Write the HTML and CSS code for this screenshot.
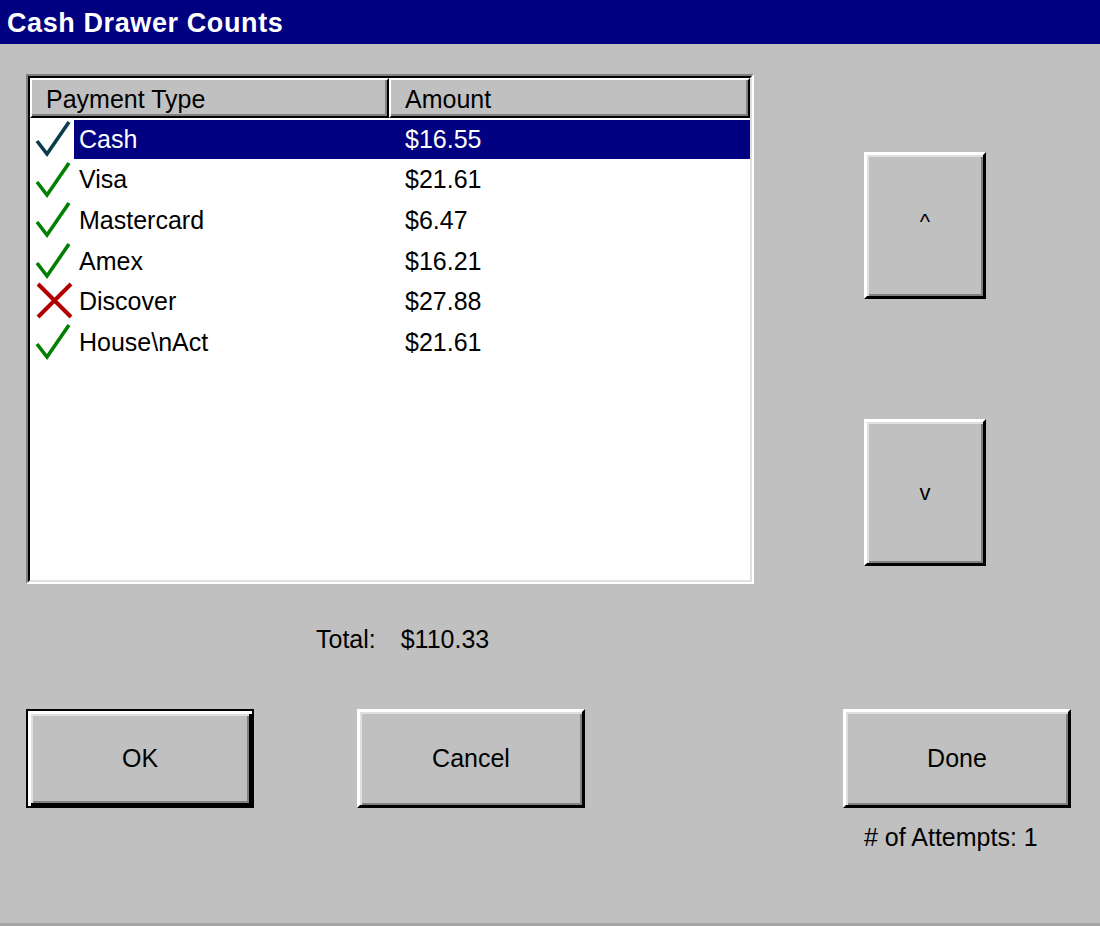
FILE: index.html
```html
<!DOCTYPE html>
<html lang="en">

<head>
    <meta charset="UTF-8">
    <title>Cash Drawer Counts</title>
    <link rel="stylesheet" href="styles.css">
</head>

<body>
    <div class="window">
        <div class="titlebar">Cash Drawer Counts</div>

        <div class="main">
            <div class="listbox">
                <div class="listbox-inner">
                    <div class="list-head">
                        <div class="head-cell col-name">Payment Type</div>
                        <div class="head-cell col-amount">Amount</div>
                    </div>

                    <div class="row selected">
                        <div class="row-icon">
                            <svg width="44" height="40" viewBox="0 0 44 40"><path d="M7 22 L17 35 L39 3" class="tick dark" /></svg>
                        </div>
                        <div class="row-text">
                            <span class="cell-name">Cash</span>
                            <span class="cell-amount">$16.55</span>
                        </div>
                    </div>
                    <div class="row">
                        <div class="row-icon">
                            <svg width="44" height="40" viewBox="0 0 44 40"><path d="M7 22 L17 35 L39 3" class="tick" /></svg>
                        </div>
                        <div class="row-text">
                            <span class="cell-name">Visa</span>
                            <span class="cell-amount">$21.61</span>
                        </div>
                    </div>
                    <div class="row">
                        <div class="row-icon">
                            <svg width="44" height="40" viewBox="0 0 44 40"><path d="M7 22 L17 35 L39 3" class="tick" /></svg>
                        </div>
                        <div class="row-text">
                            <span class="cell-name">Mastercard</span>
                            <span class="cell-amount">$6.47</span>
                        </div>
                    </div>
                    <div class="row">
                        <div class="row-icon">
                            <svg width="44" height="40" viewBox="0 0 44 40"><path d="M7 22 L17 35 L39 3" class="tick" /></svg>
                        </div>
                        <div class="row-text">
                            <span class="cell-name">Amex</span>
                            <span class="cell-amount">$16.21</span>
                        </div>
                    </div>
                    <div class="row">
                        <div class="row-icon">
                            <svg width="44" height="40" viewBox="0 0 44 40"><path d="M8 3 L41 36 M41 3 L8 36" class="cross" /></svg>
                        </div>
                        <div class="row-text">
                            <span class="cell-name">Discover</span>
                            <span class="cell-amount">$27.88</span>
                        </div>
                    </div>
                    <div class="row">
                        <div class="row-icon">
                            <svg width="44" height="40" viewBox="0 0 44 40"><path d="M7 22 L17 35 L39 3" class="tick" /></svg>
                        </div>
                        <div class="row-text">
                            <span class="cell-name">House\nAct</span>
                            <span class="cell-amount">$21.61</span>
                        </div>
                    </div>
                </div>
            </div>

            <div class="scroll-buttons">
                <div class="btn btn-arrow arrow-up">^</div>
                <div class="btn btn-arrow">v</div>
            </div>
        </div>

        <div class="total">
            <span class="total-label">Total:</span>
            <span>$110.33</span>
        </div>

        <div class="buttons">
            <div class="btn btn-wide btn-default">OK</div>
            <div class="btn btn-wide btn-cancel">Cancel</div>
            <div class="done-box">
                <div class="btn btn-wide">Done</div>
                <div class="attempts"># of Attempts: 1</div>
            </div>
        </div>
    </div>
</body>

</html>
```

FILE: styles.css
```css
* {
    padding: 0;
    margin: 0;
    box-sizing: border-box;
}

body {
    background: #c0c0c0;
    font-family: "Liberation Sans", Arial, sans-serif;
    font-size: 25px;
    color: #000000;
}

.window {
    width: 1100px;
    height: 926px;
    border-bottom: 3px solid #a4a4a4;
}

.titlebar {
    height: 44px;
    line-height: 46px;
    padding-left: 7px;
    background: #000080;
    color: #ffffff;
    font-weight: bold;
    font-size: 27px;
    letter-spacing: 0.6px;
}

.main {
    display: flex;
    padding: 30px 0 0 26px;
}

/* sunken list box */
.listbox {
    width: 728px;
    height: 510px;
    border: 2px solid;
    border-color: #808080 #ffffff #ffffff #808080;
    background: #ffffff;
}

.listbox-inner {
    height: 100%;
    border: 2px solid;
    border-color: #000000 #dfdfdf #dfdfdf #000000;
}

.list-head {
    display: flex;
    height: 41px;
    padding-bottom: 1px;
}

.head-cell {
    height: 40px;
    line-height: 38px;
    background: #c0c0c0;
    border: 2px solid;
    border-color: #ffffff #000000 #000000 #ffffff;
    box-shadow: inset -2px -2px 0 #808080;
}

.col-name {
    width: 359px;
    padding-left: 14px;
}

.col-amount {
    flex: 1;
    padding-left: 14px;
}

.row {
    display: flex;
    height: 40.6px;
}

.row-icon {
    width: 44px;
    flex-shrink: 0;
}

.row-icon svg {
    display: block;
}

.tick {
    fill: none;
    stroke: #008000;
    stroke-width: 3.6;
}

.tick.dark {
    stroke: #0c3c4c;
}

.cross {
    fill: none;
    stroke: #b00000;
    stroke-width: 4;
}

.row-text {
    flex: 1;
    display: flex;
    align-items: center;
}

.selected .row-text {
    background: #000080;
    color: #ffffff;
    height: 39px;
    margin-top: 1px;
}

.cell-name {
    width: 315px;
    padding-left: 5px;
}

.cell-amount {
    padding-left: 16px;
}

/* raised buttons */
.btn {
    display: flex;
    align-items: center;
    justify-content: center;
    background: #c0c0c0;
    border: 3px solid;
    border-color: #ffffff #000000 #000000 #ffffff;
    box-shadow: inset 2px 2px 0 #dfdfdf, inset -2px -2px 0 #808080;
}

.scroll-buttons {
    display: flex;
    flex-direction: column;
    gap: 120px;
    margin-left: 110px;
    padding-top: 78px;
}

.btn-arrow {
    width: 122px;
    height: 147px;
    font-size: 22px;
}

.arrow-up {
    padding-bottom: 8px;
}

.total {
    padding: 40px 0 0 316px;
    height: 70px;
    line-height: 30px;
}

.total-label {
    margin-right: 18px;
}

.buttons {
    display: flex;
    align-items: flex-start;
    padding: 55px 0 0 26px;
}

.btn-wide {
    width: 228px;
    height: 99px;
}

.btn-default {
    border: 2px solid #000000;
    box-shadow: inset 3px 3px 0 #ffffff, inset -3px -3px 0 #000000, inset 5px 5px 0 #dfdfdf, inset -5px -5px 0 #808080;
}

.btn-cancel {
    margin-left: 103px;
}

.done-box {
    margin-left: 258px;
}

.attempts {
    padding: 14px 0 0 21px;
    line-height: 30px;
}
```
